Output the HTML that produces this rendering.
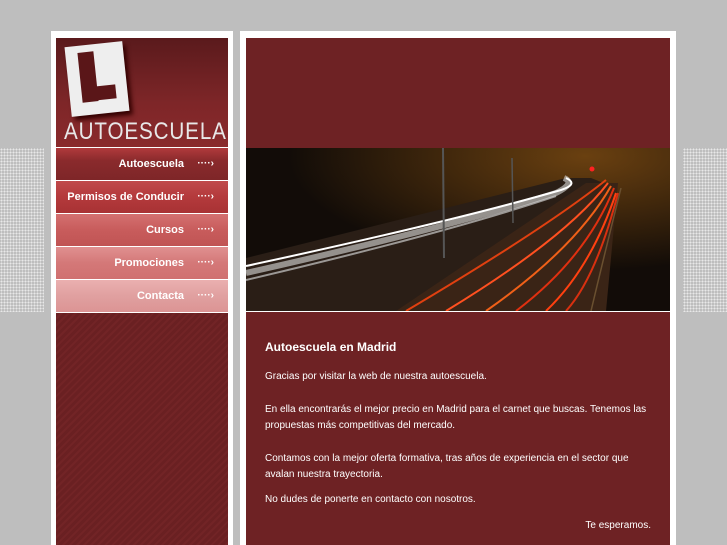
<!DOCTYPE html>
<html><head><meta charset="utf-8"><style>
body{margin:0;width:727px;height:545px;background:#bebebe;position:relative;overflow:hidden;font-family:"Liberation Sans",sans-serif}
.dots{position:absolute;top:148px;width:44px;height:164px;background-image:radial-gradient(#e8e8e8 0.8px,transparent 0.9px);background-size:3px 3px}
.lbox{position:absolute;left:51px;top:31px;width:182px;height:514px;background:#fff}
.rbox{position:absolute;left:240px;top:31px;width:436px;height:514px;background:#fff}
.logo{position:absolute;left:56px;top:38px;width:172px;height:109px;background:linear-gradient(#5a1a1c,#7e2628 60%,#8a2a2c);overflow:hidden}
.menu a{position:absolute;left:56px;width:172px;height:32px;color:#fff;font-weight:bold;font-size:11px;text-align:right;line-height:32px;box-sizing:border-box;padding-right:44px;text-decoration:none}
.menu a:after{content:"····›";position:absolute;right:14px;top:0;font-size:10px}
.side{position:absolute;left:56px;top:313px;width:172px;height:232px;background:repeating-linear-gradient(135deg,#6a2022 0 3px,#722426 3px 5px)}
.top{position:absolute;left:246px;top:38px;width:424px;height:110px;background:#6e2224}
.img{position:absolute;left:246px;top:148px;width:424px;height:163px;background:#1a1410;overflow:hidden}
.main{position:absolute;left:246px;top:312px;width:424px;height:233px;background:#6e2224;color:#fff;font-size:10px}
.main p{margin:0;position:absolute;left:19px;width:386px;line-height:16px}
</style></head><body>
<div class="dots" style="left:0"></div><div class="dots" style="left:683px"></div>
<div class="lbox"></div><div class="rbox"></div>
<div class="logo">
<div style="position:absolute;left:12px;top:6px;width:58px;height:70px;background:#eee;transform:rotate(-6deg);box-shadow:3px 4px 5px #300"></div>
<div style="position:absolute;left:24px;top:14px;width:16px;height:50px;background:#5a1618;transform:rotate(-6deg)"></div>
<div style="position:absolute;left:28px;top:48px;width:32px;height:14px;background:#5a1618;transform:rotate(-6deg)"></div>
<div style="position:absolute;left:8px;top:80px;font-size:24px;color:#e8e8e8;transform:scaleX(0.86);transform-origin:0 0;white-space:nowrap;letter-spacing:1px">AUTOESCUELA</div>
</div>
<div class="menu">
<a style="top:148px;background:linear-gradient(#b03a3c,#8a2a2c 40%,#7e2628)">Autoescuela</a>
<a style="top:181px;background:linear-gradient(#c04a4c,#b43a3c 50%,#a83234)">Permisos de Conducir</a>
<a style="top:214px;background:linear-gradient(#d47070,#c85c5c 50%,#c05454)">Cursos</a>
<a style="top:247px;background:linear-gradient(#e09090,#d47878 50%,#d07070)">Promociones</a>
<a style="top:280px;background:linear-gradient(#eab0b0,#e0a0a0 50%,#dc9494)">Contacta</a>
</div>
<div class="side"></div>
<div class="top"></div>
<div class="img"><svg width="424" height="163">
<defs><radialGradient id="g" cx="0.8" cy="0.05" r="0.7"><stop offset="0" stop-color="#6a4010"/><stop offset="1" stop-color="#120c08"/></radialGradient></defs>
<rect width="424" height="163" fill="url(#g)"/>
<polygon points="0,163 0,110 320,30 345,30 370,40 350,163" fill="#2a1e16"/>
<polygon points="150,163 340,35 372,35 360,163" fill="#3a2416"/>
<path d="M0 125 Q200 80 310 45 Q330 35 318 30" stroke="#ddd" stroke-width="6" fill="none" opacity=".6"/>
<path d="M0 118 Q200 75 315 42 Q333 36 320 30" stroke="#fff" stroke-width="2" fill="none"/>
<path d="M0 132 Q200 85 310 48" stroke="#ccc" stroke-width="2" fill="none" opacity=".7"/>
<g fill="none" stroke-width="2">
<path d="M160 163 Q300 80 360 32" stroke="#e04010"/>
<path d="M200 163 Q320 90 362 35" stroke="#ff5020"/>
<path d="M240 163 Q330 100 365 38" stroke="#f06018"/>
<path d="M270 163 Q340 110 368 40" stroke="#e03010"/>
<path d="M300 163 Q345 120 370 45" stroke="#ff4010"/>
<path d="M320 163 Q350 130 372 45" stroke="#d83010"/>
</g>
<path d="M345 163 Q360 100 375 40" stroke="#6a5030" stroke-width="1.5" fill="none"/>
<line x1="197" y1="0" x2="198" y2="110" stroke="#555" stroke-width="2"/>
<line x1="266" y1="10" x2="267" y2="75" stroke="#555" stroke-width="1.5"/>
<circle cx="346" cy="21" r="2.5" fill="#f22"/>
</svg></div>
<div class="main">
<p style="top:27px;font-size:12px;font-weight:bold">Autoescuela en Madrid</p>
<p style="top:57px">Gracias por visitar la web de nuestra autoescuela.</p>
<p style="top:90px">En ella encontrarás el mejor precio en Madrid para el carnet que buscas. Tenemos las propuestas más competitivas del mercado.</p>
<p style="top:139px">Contamos con la mejor oferta formativa, tras años de experiencia en el sector que avalan nuestra trayectoria.</p>
<p style="top:180px">No dudes de ponerte en contacto con nosotros.</p>
<p style="top:206px;text-align:right">Te esperamos.</p>
</div>
</body></html>
